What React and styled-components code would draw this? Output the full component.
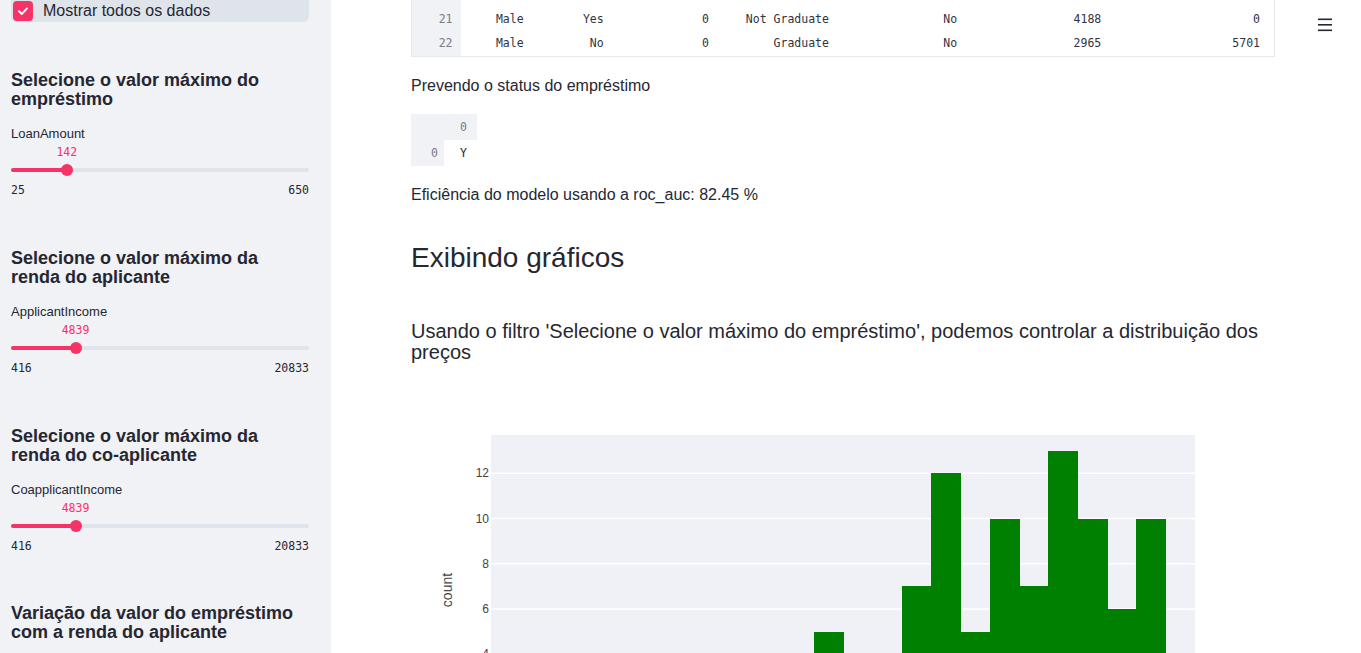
import styled, { createGlobalStyle } from 'styled-components';

const GlobalStyle = createGlobalStyle`
  html, body {
    margin: 0;
    padding: 0;
    overflow: hidden;
    background: #ffffff;
  }
  body {
    font-family: 'Liberation Sans', Arial, sans-serif;
    color: #262730;
  }
`;

const PINK = '#f63366';

const sliders = [
  {
    title: 'Selecione o valor máximo do empréstimo',
    label: 'LoanAmount',
    min: 25,
    max: 650,
    value: 142,
  },
  {
    title: 'Selecione o valor máximo da renda do aplicante',
    label: 'ApplicantIncome',
    min: 416,
    max: 20833,
    value: 4839,
  },
  {
    title: 'Selecione o valor máximo da renda do co-aplicante',
    label: 'CoapplicantIncome',
    min: 416,
    max: 20833,
    value: 4839,
  },
];

const rows = [
  ['20', 'Male', 'Yes', '0', 'Graduate', 'No', '3036', '2504'],
  ['21', 'Male', 'Yes', '0', 'Not Graduate', 'No', '4188', '0'],
  ['22', 'Male', 'No', '0', 'Graduate', 'No', '2965', '5701'],
];

// widths of the data columns after the index column
const colWidths = [71, 80, 105, 120, 128, 144, 165];

// histogram bins: counts per bin, starting three bins left of the 5-bar
const bins = [2, 3, 1, 5, 3, 2, 7, 12, 5, 10, 7, 13, 10, 6, 10];
const BIN_W = 29.3;
const FIRST_BIN_X = 814 - 411 - 80 - 3 * BIN_W;
const UNIT = 22.65;
const PLOT_H = 310;

function Slider({ label, min, max, value }) {
  const pct = ((value - min) / (max - min)) * 100;
  return (
    <SliderBlock>
      <SliderLabel>{label}</SliderLabel>
      <ValueRow>
        <ThumbValue style={{ left: `${pct}%` }}>{value}</ThumbValue>
      </ValueRow>
      <TrackArea>
        <Track />
        <Fill style={{ width: `${pct}%` }} />
        <Thumb style={{ left: `${pct}%` }} />
      </TrackArea>
      <MinMax>
        <span>{min}</span>
        <span>{max}</span>
      </MinMax>
    </SliderBlock>
  );
}

function Histogram() {
  const ticks = [4, 6, 8, 10, 12];
  return (
    <ChartSvg width='864' height='460' viewBox='0 0 864 460'>
      <g transform='translate(80,60)'>
        <rect x='0' y='0' width='704' height={PLOT_H} fill='#eff1f6' />
        {ticks.map((t) => (
          <g key={t}>
            <line
              x1='0'
              x2='704'
              y1={PLOT_H - t * UNIT}
              y2={PLOT_H - t * UNIT}
              stroke='#ffffff'
              strokeWidth='1.5'
            />
            <text
              x='-2'
              y={PLOT_H - t * UNIT + 4}
              textAnchor='end'
              fontSize='12'
              fill='#444'
            >
              {t}
            </text>
          </g>
        ))}
        {bins.map((c, i) => (
          <rect
            key={i}
            x={FIRST_BIN_X + i * BIN_W}
            y={PLOT_H - c * UNIT}
            width={BIN_W + 0.6}
            height={c * UNIT}
            fill='#008000'
            shapeRendering='crispEdges'
          />
        ))}
        <text
          transform={`translate(-39,${590 - 435}) rotate(-90)`}
          textAnchor='middle'
          fontSize='14'
          fill='#444'
        >
          count
        </text>
      </g>
    </ChartSvg>
  );
}

export default function App() {
  return (
    <>
      <GlobalStyle />
      <Page>
        <Sidebar>
          <SideInner>
            <CheckRow>
              <CheckBox>
                <svg width='12' height='12' viewBox='0 0 12 12'>
                  <path
                    d='M2 6.2 L4.8 9 L10 3.4'
                    fill='none'
                    stroke='#fff'
                    strokeWidth='2'
                    strokeLinecap='round'
                    strokeLinejoin='round'
                  />
                </svg>
              </CheckBox>
              <CheckText>Mostrar todos os dados</CheckText>
            </CheckRow>
            {sliders.map((s, i) => (
              <Section key={s.label} $first={i === 0}>
                <SideHeading>{s.title}</SideHeading>
                <Slider {...s} />
              </Section>
            ))}
            <Section $last>
              <SideHeading>Variação da valor do empréstimo com a renda do aplicante</SideHeading>
            </Section>
          </SideInner>
        </Sidebar>
        <Main>
          <Header>
            <Menu aria-label='menu'>
              <svg width='14' height='14' viewBox='0 0 14 14'>
                <rect x='0' y='0.5' width='14' height='1.6' fill='#262730' />
                <rect x='0' y='6' width='14' height='1.6' fill='#262730' />
                <rect x='0' y='11.5' width='14' height='1.6' fill='#262730' />
              </svg>
            </Menu>
          </Header>
          <Content>
            <DataTable>
              <tbody>
                {rows.map((r) => (
                  <tr key={r[0]}>
                    <IndexCell>{r[0]}</IndexCell>
                    {r.slice(1).map((v, i) => (
                      <Cell key={i} $w={colWidths[i]} $last={i === 6}>
                        {v}
                      </Cell>
                    ))}
                  </tr>
                ))}
              </tbody>
            </DataTable>
            <Text $mt={17}>Prevendo o status do empréstimo</Text>
            <SmallTable>
              <tbody>
                <tr>
                  <SmallHead />
                  <SmallHead>0</SmallHead>
                </tr>
                <tr>
                  <SmallIndex>0</SmallIndex>
                  <SmallCell>Y</SmallCell>
                </tr>
              </tbody>
            </SmallTable>
            <Text $mt={17}>Eficiência do modelo usando a roc_auc: 82.45 %</Text>
            <Title>Exibindo gráficos</Title>
            <SubTitle>
              Usando o filtro 'Selecione o valor máximo do empréstimo', podemos controlar a
              distribuição dos preços
            </SubTitle>
            <Histogram />
          </Content>
        </Main>
      </Page>
    </>
  );
}

const Page = styled.div`
  display: flex;
  width: 1361px;
  height: 653px;
  overflow: hidden;
`;

const Sidebar = styled.aside`
  width: 331px;
  flex-shrink: 0;
  height: 653px;
  background: #f0f2f6;
  overflow: hidden;
`;

const SideInner = styled.div`
  margin-top: -18px;
  padding: 0 22px 0 11px;
`;

const CheckRow = styled.label`
  display: flex;
  align-items: flex-end;
  height: 40px;
  padding: 0 0 1px 2px;
  box-sizing: border-box;
  background: #dfe3ea;
  border-radius: 0 0 6px 6px;
`;

const CheckBox = styled.span`
  width: 20px;
  height: 20px;
  border-radius: 4px;
  background: ${PINK};
  display: flex;
  align-items: center;
  justify-content: center;
`;

const CheckText = styled.span`
  margin-left: 10px;
  font-size: 16px;
  line-height: 20px;
  color: #262730;
`;

const Section = styled.section`
  margin-top: ${(p) => (p.$first ? 49 : p.$last ? 51 : 52)}px;
`;

const SideHeading = styled.h3`
  margin: 0;
  font-size: 18px;
  line-height: 19px;
  font-weight: 700;
  color: #262730;
`;

const SliderBlock = styled.div`
  margin-top: 17px;
`;

const SliderLabel = styled.div`
  font-size: 13px;
  line-height: 16px;
  color: #262730;
`;

const ValueRow = styled.div`
  position: relative;
  height: 14px;
  margin-top: 3px;
`;

const ThumbValue = styled.span`
  position: absolute;
  top: 0;
  transform: translateX(-50%);
  font-family: 'DejaVu Sans Mono', monospace;
  font-size: 11.5px;
  line-height: 14px;
  color: ${PINK};
`;

const TrackArea = styled.div`
  position: relative;
  height: 12px;
  margin-top: 5px;
`;

const Track = styled.div`
  position: absolute;
  left: 0;
  right: 0;
  top: 4px;
  height: 4px;
  border-radius: 2px;
  background: #dfe3ea;
`;

const Fill = styled.div`
  position: absolute;
  left: 0;
  top: 4px;
  height: 4px;
  border-radius: 2px;
  background: ${PINK};
`;

const Thumb = styled.div`
  position: absolute;
  top: 0;
  width: 12px;
  height: 12px;
  margin-left: -6px;
  border-radius: 50%;
  background: ${PINK};
`;

const MinMax = styled.div`
  display: flex;
  justify-content: space-between;
  margin-top: 7px;
  font-family: 'DejaVu Sans Mono', monospace;
  font-size: 11.5px;
  line-height: 14px;
  color: #262730;
`;

const Main = styled.main`
  flex: 1;
  position: relative;
  background: #ffffff;
  overflow: hidden;
`;

const Header = styled.header`
  position: absolute;
  top: 0;
  right: 0;
  height: 48px;
  padding: 0 29px 0 0;
  display: flex;
  align-items: flex-start;
`;

const Menu = styled.button`
  margin-top: 18px;
  padding: 0;
  border: none;
  background: none;
  line-height: 0;
`;

const Content = styled.div`
  width: 864px;
  margin-left: 80px;
  margin-top: -19px;
`;

const DataTable = styled.table`
  border-collapse: collapse;
  width: 864px;
  border: 1px solid #e6e9ef;
  border-top: none;
  font-family: 'DejaVu Sans Mono', monospace;
  font-size: 11.5px;
  color: #31333f;
`;

const IndexCell = styled.td`
  width: 49px;
  height: 25px;
  padding: 0 8px 0 0;
  box-sizing: border-box;
  background: #f0f2f6;
  color: #7a7c86;
  text-align: right;
`;

const Cell = styled.td`
  width: ${(p) => p.$w}px;
  height: 25px;
  padding: 0 ${(p) => (p.$last ? 14 : 8)}px 0 0;
  box-sizing: border-box;
  text-align: right;
  white-space: nowrap;
`;

const Text = styled.p`
  margin: ${(p) => p.$mt}px 0 0;
  font-size: 16px;
  line-height: 24px;
  color: #262730;
`;

const SmallTable = styled.table`
  margin-top: 16px;
  border-collapse: collapse;
  font-family: 'DejaVu Sans Mono', monospace;
  font-size: 11.5px;
`;

const SmallHead = styled.th`
  height: 26px;
  padding: 0 10px 0 0;
  min-width: 23px;
  background: #f0f2f6;
  color: #7a7c86;
  font-weight: 400;
  text-align: right;
`;

const SmallIndex = styled.td`
  height: 26px;
  width: 33px;
  padding: 0 6px 0 0;
  box-sizing: border-box;
  background: #f0f2f6;
  color: #7a7c86;
  text-align: right;
`;

const SmallCell = styled.td`
  height: 26px;
  width: 33px;
  padding: 0 10px 0 0;
  box-sizing: border-box;
  background: #fff;
  color: #262730;
  text-align: right;
`;

const Title = styled.h2`
  margin: 33px 0 0;
  font-size: 28px;
  line-height: 36px;
  font-weight: 400;
  color: #262730;
`;

const SubTitle = styled.h3`
  margin: 45px 0 0;
  font-size: 20px;
  line-height: 21px;
  font-weight: 400;
  color: #262730;
  padding-right: 10px;
`;

const ChartSvg = styled.svg`
  display: block;
  margin-top: 12px;
  font-family: 'Liberation Sans', Arial, sans-serif;
`;
